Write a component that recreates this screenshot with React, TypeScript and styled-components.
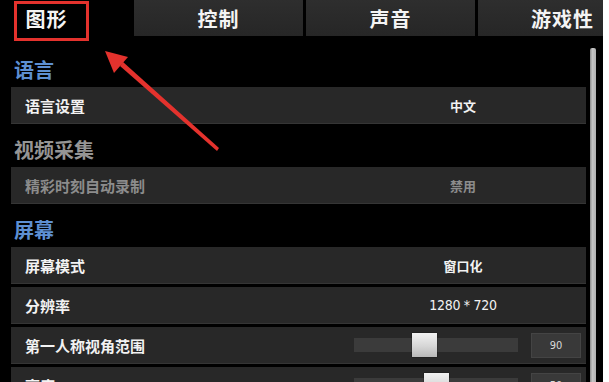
import React from 'react'
import styled, { createGlobalStyle } from 'styled-components'

const GlobalStyle = createGlobalStyle`
  html, body {
    margin: 0;
    padding: 0;
    background: #fff;
  }
  body {
    font-family: 'Noto Sans CJK SC', 'Noto Sans', sans-serif;
  }
`

const Screen = styled.div`
  position: relative;
  width: 603px;
  height: 382px;
  background: #000;
  overflow: hidden;
`

const TabBar = styled.div`
  display: flex;
  gap: 3px;
  height: 36px;
  margin-left: -38px;
`

const Tab = styled.div<{ $active?: boolean }>`
  flex: 0 0 169px;
  display: flex;
  align-items: center;
  justify-content: center;
  background: ${(p) => (p.$active ? '#000' : 'linear-gradient(180deg, #2e2e2e 0, #262626 100%)')};
  color: #f4f4f4;
  font-size: 20px;
  font-weight: 700;
  letter-spacing: 1px;
`

const Body = styled.div`
  display: flex;
  height: 346px;
`

const Content = styled.div`
  flex: 1;
  padding: 8px 4px 0 11px;
  display: flex;
  flex-direction: column;
`

const Scrollbar = styled.div`
  width: 6px;
  margin: 12px 7px 0 0;
  background: linear-gradient(90deg, #8a8a8a 0, #c4c4c4 40%, #b0b0b0 100%);
  border-radius: 2px 2px 0 0;
`

const SectionTitle = styled.div<{ $muted?: boolean }>`
  height: 43px;
  flex: 0 0 43px;
  box-sizing: border-box;
  display: flex;
  align-items: flex-end;
  padding: 0 0 7px 3px;
  font-size: 20px;
  font-weight: 700;
  line-height: 1;
  color: ${(p) => (p.$muted ? '#959595' : '#5d8fd2')};
`

const Rows = styled.div`
  display: flex;
  flex-direction: column;
  gap: 3px;
`

const Row = styled.div<{ $muted?: boolean }>`
  flex: 0 0 37px;
  height: 37px;
  box-sizing: border-box;
  display: grid;
  grid-template-columns: 1fr 246px;
  align-items: center;
  background: #282828;
  border-bottom: 1px solid #353535;
  color: ${(p) => (p.$muted ? '#8c8c8c' : '#f2f2f2')};
`

const Label = styled.div`
  padding-left: 14px;
  font-size: 15px;
  font-weight: 700;
`

const Value = styled.div`
  text-align: center;
  font-size: 13px;
  font-weight: 700;
`

const NumValue = styled(Value)`
  font-family: 'DejaVu Sans Condensed', 'Liberation Sans Narrow', 'Liberation Sans', sans-serif;
  font-stretch: condensed;
  font-weight: 400;
  font-size: 14px;
  letter-spacing: -0.3px;
`

const SliderCell = styled.div`
  display: flex;
  align-items: center;
  padding-left: 14px;
  gap: 13px;
`

const Track = styled.div`
  position: relative;
  width: 164px;
  height: 14px;
  background: #3b3b3b;
`

const Thumb = styled.div`
  position: absolute;
  top: -5px;
  width: 25px;
  height: 24px;
  background: linear-gradient(180deg, #f2f2f2 0, #d6d6d6 55%, #b8b8b8 100%);
  box-shadow: 0 0 1px #000;
`

const NumBox = styled.div`
  width: 50px;
  height: 25px;
  box-sizing: border-box;
  display: flex;
  align-items: center;
  justify-content: center;
  background: #393939;
  border: 1px solid #444;
  color: #d8d8d8;
  font-family: 'DejaVu Sans Condensed', 'Liberation Sans', sans-serif;
  font-size: 11px;
`

const Highlight = styled.div`
  position: absolute;
  left: 14px;
  top: 1px;
  width: 75px;
  height: 40px;
  box-sizing: border-box;
  border: 3px solid #e4322d;
  pointer-events: none;
`

const Overlay = styled.svg`
  position: absolute;
  left: 0;
  top: 0;
  pointer-events: none;
`

type SliderProps = { pct: number; value: string }

const Slider: React.FC<SliderProps> = ({ pct, value }) => (
  <SliderCell>
    <Track>
      <Thumb style={{ left: `${pct * 139}px` }} />
    </Track>
    <NumBox>{value}</NumBox>
  </SliderCell>
)

const tabs = ['图形', '控制', '声音', '游戏性']

const App: React.FC = () => {
  return (
    <>
      <GlobalStyle />
      <Screen>
        <TabBar>
          {tabs.map((t, i) => (
            <Tab key={t} $active={i === 0}>
              {t}
            </Tab>
          ))}
        </TabBar>
        <Body>
          <Content>
            <SectionTitle>语言</SectionTitle>
            <Row>
              <Label>语言设置</Label>
              <Value>中文</Value>
            </Row>
            <SectionTitle $muted>视频采集</SectionTitle>
            <Row $muted>
              <Label>精彩时刻自动录制</Label>
              <Value>禁用</Value>
            </Row>
            <SectionTitle>屏幕</SectionTitle>
            <Rows>
              <Row>
                <Label>屏幕模式</Label>
                <Value>窗口化</Value>
              </Row>
              <Row>
                <Label>分辨率</Label>
                <NumValue>1280 * 720</NumValue>
              </Row>
              <Row>
                <Label>第一人称视角范围</Label>
                <Slider pct={0.42} value='90' />
              </Row>
              <Row>
                <Label>亮度</Label>
                <Slider pct={0.5} value='50' />
              </Row>
            </Rows>
          </Content>
          <Scrollbar />
        </Body>
        <Highlight />
        <Overlay width='603' height='382' viewBox='0 0 603 382'>
          <path d='M217 151 L219 148 L123 62 L120 66 Z' fill='#e4322d' />
          <path d='M105 51 L128 57 L114 73 Z' fill='#e4322d' />
        </Overlay>
      </Screen>
    </>
  )
}

export default App
